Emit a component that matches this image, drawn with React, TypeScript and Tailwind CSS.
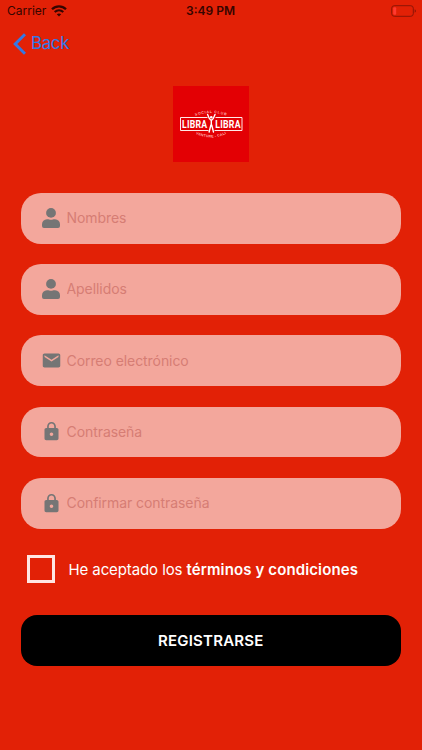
import { useState } from 'react'
import { MdEmail, MdLock } from 'react-icons/md'

function UserIcon() {
  return (
    <svg viewBox="0 0 18 20" className="w-[18px] h-5" fill="currentColor">
      <circle cx="9" cy="4.900" r="4.900" />
      <path d="M5 11.300C6.200 11 7.400 11.800 9 11.800s2.800-.8 4-.5c3 .3 5 2.300 5 5V18a2 2 0 0 1-2 2H2a2 2 0 0 1-2-2v-1.700c0-2.700 2-4.700 5-5Z" />
    </svg>
  )
}

function WifiIcon() {
  return (
    <svg viewBox="0 0 16 12" className="w-4 h-3" fill="none" stroke="currentColor">
      <path d="M1 4.300C5 .4 11 .4 15 4.300" strokeWidth="2.300" />
      <path d="M3.700 7.100C6.200 4.800 9.800 4.800 12.300 7.100" strokeWidth="2.100" />
      <path d="M8 11.500 5.800 9.200C7 8.100 9 8.100 10.200 9.200Z" fill="currentColor" stroke="none" />
    </svg>
  )
}

function BatteryIcon() {
  return (
    <svg viewBox="0 0 26 12" className="w-[26px] h-3" fill="none">
      <rect x=".7" y=".7" width="21.600" height="10.600" rx="2.600" stroke="#8d1507" strokeWidth="1" />
      <rect x="2.200" y="2.200" width="3" height="7.600" rx="1" fill="#ff3a30" />
      <path d="M23.700 4.200c1.700.6 1.700 3 0 3.600Z" fill="#8d1507" />
    </svg>
  )
}

function Logo() {
  return (
    <svg viewBox="0 0 76 76" className="w-[76px] h-[76px] bg-[#e30004]">
      <defs>
        <path id="arc-top" d="M20 30.500Q38 23.500 56 30.500" />
        <path id="arc-bottom" d="M22 47.500Q38 55.500 54 47.500" />
      </defs>
      <g fill="none" stroke="#ffe9e8" strokeWidth="1">
        <path d="M34.500 31.500H7.500V44.500H35.500" />
        <path d="M42.500 31.500H69V44.500H41.500" />
      </g>
      <g fill="#fff" fontFamily="Roboto, sans-serif" fontWeight="700" fontSize="11.500">
        <text transform="translate(9 42.200) scale(.76 1)" letterSpacing=".3">LIBRA</text>
        <text transform="translate(42.300 42.200) scale(.76 1)" letterSpacing=".3">LIBRA</text>
      </g>
      <g fill="#ffb3b0" fontFamily="'Liberation Sans', sans-serif" fontWeight="700" fontSize="3.600">
        <text letterSpacing=".7">
          <textPath href="#arc-top" startOffset="50%" textAnchor="middle">SOCIAL CLUB</textPath>
        </text>
        <text letterSpacing=".2">
          <textPath href="#arc-bottom" startOffset="50%" textAnchor="middle">VENTURE - CALI</textPath>
        </text>
      </g>
      <circle cx="38.300" cy="31.300" r="1.300" fill="#fff" />
      <path
        d="M34.600 28.500 36.300 32.500l1.200 1.400h1.600l1.200-1.400 1.700-4M38.300 34.500v5M37.900 39l-1.800 7M38.700 39l1.800 7"
        fill="none"
        stroke="#fff"
        strokeWidth="1.400"
        strokeLinecap="round"
      />
    </svg>
  )
}

const fields = [
  { name: 'nombres', label: 'Nombres', type: 'text', icon: <UserIcon /> },
  { name: 'apellidos', label: 'Apellidos', type: 'text', icon: <UserIcon /> },
  { name: 'correo', label: 'Correo electrónico', type: 'email', icon: <MdEmail className="w-[21px] h-[21px]" /> },
  { name: 'clave', label: 'Contraseña', type: 'password', icon: <MdLock className="w-[21px] h-[21px]" /> },
  { name: 'confirmar', label: 'Confirmar contraseña', type: 'password', icon: <MdLock className="w-[21px] h-[21px]" /> },
]

export default function App() {
  const [accepted, setAccepted] = useState(false)

  return (
    <div className="w-full h-[750px] overflow-hidden bg-[#e22106] font-[Inter,sans-serif]">
      <div className="h-[22px] grid grid-cols-3 items-center pl-[7px] pr-[5px] text-[#360500]">
        <div className="flex items-center gap-[5px] text-xs">
          <span>Carrier</span>
          <WifiIcon />
        </div>
        <span className="text-center text-xs font-semibold -ml-[3px]">3:49 PM</span>
        <div className="flex justify-end">
          <BatteryIcon />
        </div>
      </div>

      <button className="h-[43px] mb-px flex items-center gap-[5px] pl-[13px] text-[17px] tracking-[-0.4px] text-[#3478e5]">
        <svg viewBox="0 0 13 22" className="w-[13px] h-[22px]" fill="none" stroke="currentColor" strokeWidth="3">
          <path d="M12 1.200 2.200 11 12 20.800" />
        </svg>
        Back
      </button>

      <form className="pl-[20.5px] pr-[21px] pt-5" onSubmit={(e) => e.preventDefault()}>
        <div className="flex justify-center">
          <Logo />
        </div>

        <div className="mt-[30.75px] flex flex-col gap-[20.5px]">
          {fields.map((field) => (
            <label
              key={field.name}
              className="h-[50.75px] flex items-center rounded-[20px] bg-[#f3a79c] pl-[21px] pr-5 text-[#757575]"
            >
              <span className="w-[19px] flex justify-center items-center [&>svg]:shrink-0">{field.icon}</span>
              <input
                type={field.type}
                name={field.name}
                placeholder={field.label}
                className="flex-1 min-w-0 ml-[6px] bg-transparent outline-none text-sm tracking-[-0.07px] placeholder:text-[#d67d74]"
              />
            </label>
          ))}
        </div>

        <div className="mt-[26.5px] ml-[6.5px] flex items-center">
          <button
            type="button"
            role="checkbox"
            aria-checked={accepted}
            aria-label="términos y condiciones"
            onClick={() => setAccepted(!accepted)}
            className="w-7 h-7 border-3 border-[#ffe6e2] text-white leading-none"
          >
            {accepted ? '✓' : ''}
          </button>
          <p className="ml-[13.5px] pt-0.5 text-[15px] tracking-[-0.1px] text-white whitespace-nowrap">
            He aceptado los <span className="font-semibold tracking-[0.12px]">términos y condiciones</span>
          </p>
        </div>

        <button
          type="submit"
          className="mt-8 w-full h-[51px] pt-px rounded-2xl bg-black text-white text-[15px] tracking-[0.2px] font-semibold"
        >
          REGISTRARSE
        </button>
      </form>
    </div>
  )
}
